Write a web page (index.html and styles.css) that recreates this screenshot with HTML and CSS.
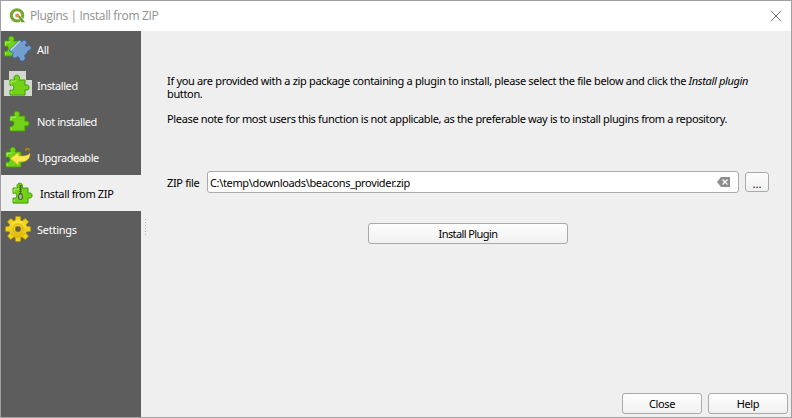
FILE: index.html
```html
<!DOCTYPE html>
<html lang="en">
<head>
<meta charset="utf-8">
<title>Plugins | Install from ZIP</title>
<link rel="stylesheet" href="styles.css">
</head>
<body>
<svg class="defs" width="0" height="0">
  <defs>
    <linearGradient id="gold" x1="0" y1="0" x2="0" y2="1">
      <stop offset="0" stop-color="#ffe63c"/><stop offset="1" stop-color="#dcb80a"/>
    </linearGradient>
    <path id="piece" d="M1.5 5.5H6.2C4.8 3 5.8.7 8.3.7S11.8 3 10.5 5.5H16.5V10.8C18.8 9.8 20.6 10.8 20.6 13S18.8 16.2 16.5 15.2V20.6H1.5V15.5C4 16.5 5.3 15 5.3 13S4 9.8 1.5 11Z"/>
    <g id="puzzle">
      <use href="#piece" fill="#73d216" stroke="#3f9d0b"/>
      <path d="M2.6 10V6.6H7.4M2.6 19.2V17" stroke="#b4f06c" fill="none"/>
    </g>
  </defs>
</svg>
<div class="window">
  <header class="titlebar">
    <svg class="logo" width="18" height="16" viewBox="0 0 18 16">
      <circle cx="8" cy="7.4" r="5.7" fill="none" stroke="#75a532" stroke-width="3"/>
      <path d="M8 7.5H11L16.5 14.5H12.4Z" fill="#6b9a2c" stroke="#fff" stroke-width=".5"/>
      <circle cx="8.2" cy="7.4" r="2" fill="#ee8c35"/>
    </svg>
    <span class="title">Plugins | Install from ZIP</span>
    <svg class="close" width="10" height="10" viewBox="0 0 10 10"><path d="M0 0L10 10M10 0L0 10" stroke="#777" fill="none"/></svg>
  </header>
  <div class="main">
    <nav class="sidebar">
      <div class="item">
        <svg class="icon" width="32" height="32" viewBox="0 0 32 32">
          <use href="#puzzle" x="1" y="2.5"/>
          <path d="M7 17.500L17.800 6.800L20 9C20.500 7 22.500 6.500 24 8S24.500 11 23 12L25 13.700C25.500 12.300 27.500 12 28.700 13.500S29 17.300 26.500 17.500L24.500 20.500L22.200 22.700C24 23.700 23.500 27 21 28C18.500 28.500 17 27 17.500 25L15.500 23.500C14 25.500 11 25.500 10.500 23.300S11 20.800 11.500 20.500Z" fill="#729fcf" stroke="#3465a4" stroke-width=".8"/>
          <path d="M8.500 17.300L17.800 8.100" stroke="#c4daf2" stroke-width="1.300"/>
        </svg>
        <span class="label l-all">All</span>
      </div>
      <div class="item">
        <svg class="icon" width="32" height="32" viewBox="0 0 32 32">
          <path d="M7 2H24V11H30V27H2V11H7Z" fill="#d3d7cf"/>
          <use href="#puzzle" x="6.5" y="5.5"/>
        </svg>
        <span class="label l-installed">Installed</span>
      </div>
      <div class="item">
        <svg class="icon" width="32" height="32" viewBox="0 0 32 32"><use href="#puzzle" x="6.5" y="5.5"/></svg>
        <span class="label l-not">Not installed</span>
      </div>
      <div class="item">
        <svg class="icon" width="32" height="32" viewBox="0 0 32 32">
          <use href="#puzzle" x="2.5" y="5.500"/>
          <path d="M24 10V8.200C25 7.500 27 7.300 27.500 9.500" fill="none" stroke="#b08d00" stroke-width="1.600"/>
          <path d="M8.500 17.500L16.500 11.500V15H21C24.500 15 26.500 14 27.800 12.300C28.500 17 25 20.800 20 20.800H16.500V24Z" fill="#fce94f" stroke="#d9b916" stroke-width=".6"/>
        </svg>
        <span class="label l-upgrade">Upgradeable</span>
      </div>
      <div class="item selected">
        <svg class="icon" width="32" height="32" viewBox="0 0 32 32">
          <use href="#puzzle" x="6.500" y="5.500"/>
          <path d="M15.500 8V17" stroke="#4f554f" stroke-width="2.600" stroke-dasharray="1 1"/>
          <path d="M15.500 8V17" stroke="#4f554f"/>
          <rect x="13.700" y="17" width="3.600" height="5.500" rx="1.500" fill="#a5c796" stroke="#3d443d"/>
        </svg>
        <span class="label l-zip">Install from ZIP</span>
      </div>
      <div class="item">
        <svg class="icon" width="32" height="32" viewBox="0 0 32 32">
          <g transform="translate(16 16)">
            <g fill="#f0d21c" stroke="#b18e00" stroke-width=".7">
              <path id="tooth" d="M-3-8L-2.300-12.600H2.300L3-8Z"/>
              <use href="#tooth" transform="rotate(45)"/><use href="#tooth" transform="rotate(90)"/>
              <use href="#tooth" transform="rotate(135)"/><use href="#tooth" transform="rotate(180)"/>
              <use href="#tooth" transform="rotate(225)"/><use href="#tooth" transform="rotate(270)"/>
              <use href="#tooth" transform="rotate(315)"/>
            </g>
            <circle r="9" fill="url(#gold)"/>
            <circle r="5" fill="none" stroke="#e0bd10" stroke-width="1.500"/>
            <circle r="2.800" fill="#5b5b5b" stroke="#a78500"/>
          </g>
        </svg>
        <span class="label l-settings">Settings</span>
      </div>
    </nav>
    <div class="splitter"><svg width="3" height="18" viewBox="0 0 3 18"><path d="M1.500 1V18" stroke="#b5b5b5" stroke-dasharray="1 2"/></svg></div>
    <main class="page">
      <p class="text"><span class="t1">If you are provided with a zip package containing a plugin to install, please select the file below and click the </span><em>Install plugin</em><br><span class="t2">button.</span></p>
      <p class="text"><span class="t3">Please note for most users this function is not applicable, as the preferable way is to install plugins from a repository.</span></p>
      <div class="file-row">
        <span class="file-label">ZIP file</span>
        <div class="field">
          <span class="path">C:\temp\downloads\beacons_provider.zip</span>
          <svg width="13" height="10" viewBox="0 0 13 10"><path d="M0 5L4 0H13V10H4Z" fill="#8d8d8d"/><path d="M5.500 2.500L10.500 7.500M10.500 2.500L5.500 7.500" stroke="#fff" stroke-width="1.200"/></svg>
        </div>
        <div class="button browse">...</div>
      </div>
      <div class="button install"><span class="b-install">Install Plugin</span></div>
      <footer class="actions">
        <div class="button"><span class="b-close">Close</span></div>
        <div class="button"><span class="b-help">Help</span></div>
      </footer>
    </main>
  </div>
</div>
</body>
</html>
```
FILE: styles.css
```css
* { box-sizing: border-box; }
body { margin: 0; font: 11px/13px "Noto Sans", sans-serif; letter-spacing: -.35px; color: #000; }
.defs { display: block; height: 0; }
.window { width: 792px; height: 418px; border: 1px solid #a0a0a0; background: #efefef; display: flex; flex-direction: column; overflow: hidden; }
.titlebar { height: 30px; flex: none; background: #fff; display: flex; align-items: center; padding: 0 10px 0 8px; }
.logo { margin-top: -1px; }
.title { font: 12px/16px "Open Sans", sans-serif; color: #8f8f8f; margin-left: 3px; flex: 1; white-space: nowrap; }
.close { margin-top: -1px; overflow: visible; }
.main { flex: 1; display: flex; min-height: 0; }
.sidebar { width: 140px; flex: none; background: #5d5d5d; color: #fff; }
.item { height: 36px; display: flex; align-items: center; padding-left: 1px; white-space: nowrap; }
.item.selected { background: #efefef; color: #000; padding-left: 4px; }
.icon { flex: none; margin-right: 3px; }
.label { margin-top: 0; }
.l-installed, .l-not { letter-spacing: -.43px; }
.l-upgrade { letter-spacing: -.48px; }
.l-settings { letter-spacing: -.25px; }
.splitter { width: 8px; padding: 187px 0 0 3px; }
.page { flex: 1; display: flex; flex-direction: column; padding: 43px 3px 3px 18px; min-width: 0; white-space: nowrap; }
.text { margin: 0 0 12px; }
.t1 { letter-spacing: -.33px; }
.file-row { display: flex; align-items: center; margin-top: 34px; height: 22px; }
.file-label { width: 40px; }
.field { width: 532px; height: 22px; border: 1px solid #aaa; border-radius: 3px; background: #fff; display: flex; align-items: center; justify-content: space-between; padding: 0 8px 0 2px; }
.button { width: 80px; height: 21px; border: 1px solid #aaa; border-radius: 3px; background: linear-gradient(#fefefe, #f0f0f0); display: flex; align-items: center; justify-content: center; }
.browse { width: 24px; height: 20px; margin-left: 6px; padding-top: 3px; letter-spacing: 0; }
.install { width: 200px; margin: 30px 0 0 201px; flex: none; }
.b-install { letter-spacing: -.6px; }
.actions { margin-top: auto; display: flex; justify-content: flex-end; gap: 6px; }
```
